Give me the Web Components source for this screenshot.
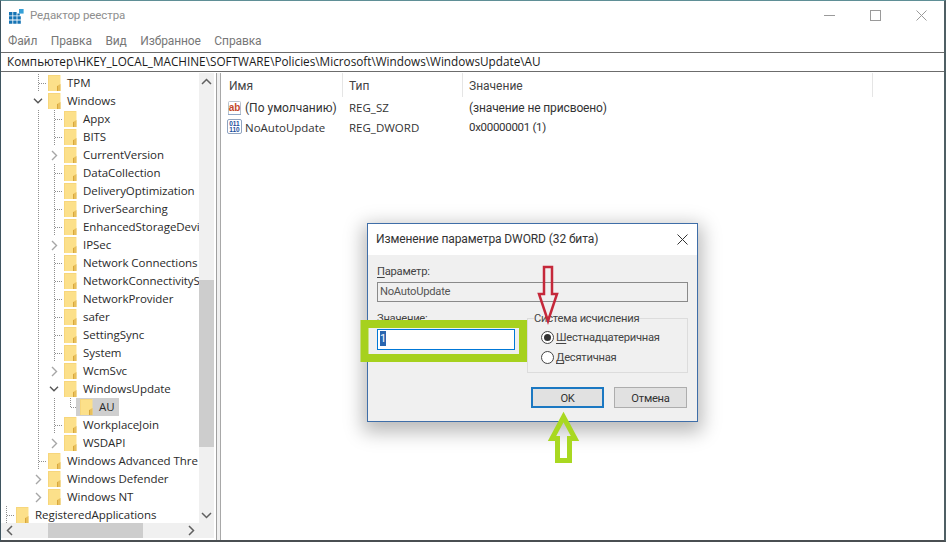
<!DOCTYPE html>
<html lang="ru">
<head>
<meta charset="utf-8">
<title>Редактор реестра</title>
<style>
  html, body { margin: 0; height: 100%; background: #fff; overflow: hidden; }
  body { font: 12px "Open Sans", "Liberation Sans", sans-serif; color: #222; }
</style>
</head>
<body>
<regedit-window>
  <title-bar slot="title"></title-bar>
  <menu-bar slot="menu"></menu-bar>
  <address-bar slot="address">Компьютер\HKEY_LOCAL_MACHINE\SOFTWARE\Policies\Microsoft\Windows\WindowsUpdate\AU</address-bar>
  <key-tree slot="tree"></key-tree>
  <value-list slot="list"></value-list>
</regedit-window>
<dword-dialog></dword-dialog>
<note-marks></note-marks>

<script>
// Регистр: окно, дерево, список значений, диалог и пометки поверх скриншота
(function () {
  const FONT = '"Open Sans", "Liberation Sans", sans-serif';
  const NARROW = 'Roboto, "Liberation Sans", sans-serif';

  function shadow(el, html) {
    el.attachShadow({ mode: "open" }).innerHTML = html;
  }

  class RegeditWindow extends HTMLElement {
    connectedCallback() {
      shadow(this, `
        <style>
          :host {
            display: flex;
            flex-direction: column;
            box-sizing: border-box;
            width: 946px;
            height: 542px;
            background: #fff;
            border-top: 1px solid #5f8f96;
            border-left: 1px solid #3f5560;
            border-bottom: 2px solid #4a4f52;
            border-right: 2px solid #4f5f64;
            font-family: ${FONT};
          }
          .panes { display: flex; flex: 1; min-height: 0; margin-top: 1px; }
          .left { width: 215px; flex: none; display: flex; }
          .split { width: 5px; flex: none; background: #f0f0f0; border-left: 1px solid #a0a0a0; border-right: 1px solid #a8a8a8; box-sizing: border-box; }
          .right { flex: 1; min-width: 0; display: flex; }
        </style>
        <slot name="title"></slot>
        <slot name="menu"></slot>
        <slot name="address"></slot>
        <div class="panes">
          <div class="left"><slot name="tree"></slot></div>
          <div class="split"></div>
          <div class="right"><slot name="list"></slot></div>
        </div>`);
    }
  }

  class TitleBar extends HTMLElement {
    connectedCallback() {
      shadow(this, `
        <style>
          :host { display: flex; align-items: center; height: 29px; flex: none; color: #8e8e8e; font: 11.5px ${NARROW}; }
          svg { display: block; flex: none; }
          .app { margin: 2px 6px 0 8px; }
          .name { flex: 1; letter-spacing: -.1px; padding-bottom: 2px; }
          .btns { display: flex; }
          .btn { width: 46px; height: 29px; display: flex; align-items: center; justify-content: center; }
        </style>
        <svg class="app" width="15" height="15" viewBox="0 0 15 15">
          <path d="M0 3h3.400v3.400H0zM4.200 3h3.400v3.400H4.200zM8.400 4.600h2.400v1.800H8.400zM0 7.200h3.400v3.400H0zM4.200 7.200h3.400v3.400H4.200zM8.400 7.200h3.400v3.400H8.400zM0 11.400h3.400v3.400H0zM4.200 11.400h3.400v3.400H4.200zM8.400 11.400h3.400v3.400H8.400z" fill="#1573b4"/>
          <path d="M10 0h4.600v4.600H10z" fill="#35a0d8"/>
        </svg>
        <span class="name">Редактор реестра</span>
        <div class="btns">
          <span class="btn"><svg width="11" height="11" viewBox="0 0 11 11"><path d="M0 5.500h11" stroke="#9a9a9a" fill="none"/></svg></span>
          <span class="btn"><svg width="11" height="11" viewBox="0 0 11 11"><rect x=".5" y=".5" width="10" height="10" stroke="#9a9a9a" fill="none"/></svg></span>
          <span class="btn"><svg width="11" height="11" viewBox="0 0 11 11"><path d="M.5.5l10 10M10.500.5l-10 10" stroke="#9a9a9a" fill="none"/></svg></span>
        </div>`);
    }
  }

  class MenuBar extends HTMLElement {
    connectedCallback() {
      const items = ["Файл", "Правка", "Вид", "Избранное", "Справка"];
      shadow(this, `
        <style>
          :host { display: flex; align-items: center; gap: 13.5px; height: 22px; flex: none; padding-left: 7px; color: #777; font: 12px ${NARROW}; letter-spacing: -.1px; box-sizing: border-box; }
        </style>
        ${items.map((t) => `<span>${t}</span>`).join("")}`);
    }
  }

  class AddressBar extends HTMLElement {
    connectedCallback() {
      shadow(this, `
        <style>
          :host { display: flex; align-items: center; flex: none; box-sizing: border-box; height: 20px; padding: 0 0 2px 6px; background: #fff; border: 1px solid #6c6c6c; border-width: 1px 0 1px 0; color: #1a1a1a; font-size: 11.75px; }
        </style>
        <slot></slot>`);
    }
  }

  const CHEV_DOWN = `<svg class="down" width="10" height="6" viewBox="0 0 10 6"><path d="M1 .7l4 4 4-4" stroke="#555" stroke-width="1.400" fill="none"/></svg>`;
  const CHEV_RIGHT = `<svg class="right" width="7" height="11" viewBox="0 0 7 11"><path d="M1 1l4.500 4.500L1 10" stroke="#a6a6a6" stroke-width="1.400" fill="none"/></svg>`;

  // level: сколько ячеек слева; lines: столбцы сквозных пунктирных линий
  class TreeRow extends HTMLElement {
    connectedCallback() {
      const level = +this.getAttribute("level");
      const lines = (this.getAttribute("lines") || "").split(",").filter(Boolean).map(Number);
      const node = this.getAttribute("node") || "leaf";
      let cells = "";
      for (let i = 0; i < level; i++) {
        const last = i === level - 1;
        const chevron = last && (node === "open" || node === "closed");
        let cls = "cell";
        if (lines.includes(i) && !chevron) cls += " v";
        let inner = "";
        if (last && node === "leaf") cls += " h";
        if (last && node === "end") cls += " h up";
        if (last && node === "open") inner = CHEV_DOWN;
        if (last && node === "closed") inner = CHEV_RIGHT;
        cells += `<span class="${cls}">${inner}</span>`;
      }
      const sel = this.hasAttribute("selected");
      shadow(this, `
        <style>
          :host { display: flex; height: 18px; align-items: center; white-space: nowrap; font-size: 11.5px; letter-spacing: -.05px; color: #2a2a2a; }
          .cell { width: 16px; height: 18px; flex: none; box-sizing: border-box; display: flex; align-items: center; }
          .cell svg { display: block; }
          .cell svg.right { margin-left: 2px; }
          .v { background: repeating-linear-gradient(#8f8f8f 0 1px, transparent 1px 2px) 5px 0 / 1px 100% no-repeat; }
          .h::after { content: ""; width: 8px; height: 1px; margin-left: 6px; background: repeating-linear-gradient(90deg, #8f8f8f 0 1px, transparent 1px 2px); }
          .up { background: repeating-linear-gradient(#8f8f8f 0 1px, transparent 1px 2px) 5px 0 / 1px 50% no-repeat; }
          .entry { display: flex; align-items: center; height: 18px; margin-left: -1px; }
          .entry .label { padding-bottom: 2px; }
          .sel { background: #cfcfcf; margin-left: -5px; padding: 0 4px; }
          .folder { display: block; flex: none; margin-right: 6px; }
        </style>
        ${cells}
        <span class="entry ${sel ? "sel" : ""}">
          <svg class="folder" width="13" height="16" viewBox="0 0 13 16">
            <path d="M0 0h12.500v16H0z" fill="#fce08a"/>
            <path d="M0 0h12v1H1v15H0z" fill="#f4cf73" opacity=".6"/>
            <path d="M9 11l3.500-2v7H9z" fill="#e8bf5c"/>
            <path d="M9 11h1v5H9z" fill="#d9a83c"/>
          </svg>
          <span class="label"><slot></slot></span>
        </span>`);
    }
  }

  class KeyTree extends HTMLElement {
    connectedCallback() {
      const rows = [
        [3, "leaf", "2", "TPM"],
        [3, "open", "", "Windows"],
        [4, "leaf", "2,3", "Appx"],
        [4, "leaf", "2,3", "BITS"],
        [4, "closed", "2,3", "CurrentVersion"],
        [4, "leaf", "2,3", "DataCollection"],
        [4, "leaf", "2,3", "DeliveryOptimization"],
        [4, "leaf", "2,3", "DriverSearching"],
        [4, "leaf", "2,3", "EnhancedStorageDevi"],
        [4, "closed", "2,3", "IPSec"],
        [4, "leaf", "2,3", "Network Connections"],
        [4, "leaf", "2,3", "NetworkConnectivityS"],
        [4, "leaf", "2,3", "NetworkProvider"],
        [4, "leaf", "2,3", "safer"],
        [4, "leaf", "2,3", "SettingSync"],
        [4, "leaf", "2,3", "System"],
        [4, "closed", "2,3", "WcmSvc"],
        [4, "open", "2,3", "WindowsUpdate"],
        [5, "end", "2,3", "AU", true],
        [4, "leaf", "2,3", "WorkplaceJoin"],
        [4, "closed", "2,3", "WSDAPI"],
        [3, "leaf", "2", "Windows Advanced Thre"],
        [3, "closed", "2", "Windows Defender"],
        [3, "closed", "2", "Windows NT"],
        [1, "leaf", "0", "RegisteredApplications"],
      ];
      shadow(this, `
        <style>
          :host { display: flex; flex-direction: column; flex: 1; min-width: 0; overflow: hidden; }
          .top { display: flex; flex: 1; min-height: 0; }
          .rows { flex: 1; min-width: 0; overflow: hidden; padding-top: 1px; }
          .vbar { width: 15px; flex: none; margin-right: 2px; background: #f0f0f0; display: flex; flex-direction: column; }
          .hbar { height: 15px; flex: none; margin: 0 2px 2px 0; padding-right: 15px; background: #f0f0f0; display: flex; align-items: center; }
          .arr { flex: none; display: flex; align-items: center; justify-content: center; }
          .vbar .arr { height: 16px; }
          .hbar .arr { width: 16px; height: 15px; }
          .vsp1 { height: 191px; flex: none; }
          .vthumb { height: 167px; flex: none; background: #cdcdcd; }
          .vsp2 { flex: 1; }
          .hsp1 { width: 31px; flex: none; }
          .hthumb { width: 95px; height: 15px; flex: none; background: #cdcdcd; }
          .hsp2 { flex: 1; }
        </style>
        <div class="top">
          <div class="rows">
            ${rows.map(([lvl, node, lines, name, sel]) =>
              `<tree-row level="${lvl}" node="${node}" lines="${lines}"${sel ? " selected" : ""}>${name}</tree-row>`).join("")}
          </div>
          <div class="vbar">
            <span class="arr"><svg width="11" height="7" viewBox="0 0 11 7"><path d="M1 6l4.500-4.500L10 6" stroke="#606060" stroke-width="1.500" fill="none"/></svg></span>
            <span class="vsp1"></span><span class="vthumb"></span><span class="vsp2"></span>
            <span class="arr"><svg width="11" height="7" viewBox="0 0 11 7"><path d="M1 1l4.500 4.500L10 1" stroke="#606060" stroke-width="1.500" fill="none"/></svg></span>
          </div>
        </div>
        <div class="hbar">
          <span class="arr"><svg width="7" height="11" viewBox="0 0 7 11"><path d="M6 1L1.500 5.500 6 10" stroke="#606060" stroke-width="1.500" fill="none"/></svg></span>
          <span class="hsp1"></span><span class="hthumb"></span><span class="hsp2"></span>
          <span class="arr"><svg width="7" height="11" viewBox="0 0 7 11"><path d="M1 1l4.500 4.500L1 10" stroke="#606060" stroke-width="1.500" fill="none"/></svg></span>
        </div>`);
    }
  }

  class ValueList extends HTMLElement {
    connectedCallback() {
      shadow(this, `
        <style>
          :host { display: block; flex: 1; min-width: 0; font: 12px ${NARROW}; color: #333; }
          .grid { display: grid; grid-template-columns: 122px 120px 410px; }
          .h { height: 24px; display: flex; align-items: center; padding: 2px 0 0 8px; box-sizing: border-box; border-right: 1px solid #e5e5e5; color: #444; }
          .c { height: 20px; display: flex; align-items: center; padding-left: 6px; gap: 2px; white-space: nowrap; box-sizing: border-box; }
          .first { padding-top: 1px; }
          .h.t, .c.t { padding-left: 6px; }
          .lat { font-family: ${FONT}; font-size: 11.5px; }
          .val { letter-spacing: -.13px; }
          .num { font-size: 11.5px; letter-spacing: -.3px; }
          svg { display: block; flex: none; }
          text { font-family: "Liberation Sans", sans-serif; font-weight: 700; }
        </style>
        <div class="grid">
          <div class="h">Имя</div><div class="h t">Тип</div><div class="h t">Значение</div>
          <div class="c first">
            <svg width="16" height="16" viewBox="0 0 16 16">
              <path d="M1.500 14V2.500a1 1 0 0 1 1-1h10a1 1 0 0 1 1 1V14" fill="#fff" stroke="#b9c2cc"/>
              <path d="M1 14.500h13" stroke="#8fa7c8"/>
              <text x="7.500" y="10.500" text-anchor="middle" font-size="10" fill="#c4482a">ab</text>
            </svg>
            <span>(По умолчанию)</span>
          </div>
          <div class="c t lat first">REG_SZ</div><div class="c t first val">(значение не присвоено)</div>
          <div class="c">
            <svg width="16" height="16" viewBox="0 0 16 16">
              <rect x=".5" y=".5" width="14" height="14" rx="1.500" fill="#fff" stroke="#8fa3c0"/>
              <text x="7.500" y="7" text-anchor="middle" font-size="6.500" fill="#1d4f9c">011</text>
              <text x="7.500" y="13" text-anchor="middle" font-size="6.500" fill="#1d4f9c">110</text>
            </svg>
            <span class="lat">NoAutoUpdate</span>
          </div>
          <div class="c t lat">REG_DWORD</div><div class="c t num">0x00000001 (1)</div>
        </div>`);
    }
  }

  class DwordDialog extends HTMLElement {
    connectedCallback() {
      shadow(this, `
        <style>
          :host { position: absolute; left: 367px; top: 223px; width: 331px; height: 199px; box-sizing: border-box; display: flex; flex-direction: column; background: #f0f0f0; border: 1px solid #3f6ea8; box-shadow: 0 6px 18px 4px rgba(0,0,0,.28); font: 11.2px ${NARROW}; letter-spacing: -.25px; color: #444; }
          .title { height: 31px; flex: none; background: #fff; display: flex; align-items: center; padding: 0 8px; color: #333; font-size: 12px; letter-spacing: -.1px; }
          .title span { flex: 1; padding-bottom: 2px; }
          .title svg { display: block; margin-right: 1px; }
          .body { flex: 1; display: flex; flex-direction: column; padding: 8px 9px 0 9px; }
          .label { height: 18px; line-height: 18px; }
          u { text-underline-offset: 2px; }
          .ro { height: 20px; box-sizing: border-box; border: 1px solid #8a8a8a; background: #f0f0f0; padding-left: 2px; line-height: 18px; color: #555; margin-top: 1px; }
          .row { display: flex; margin-top: 8px; height: 64px; }
          .val { width: 150px; flex: none; }
          .input { display: block; box-sizing: border-box; height: 21px; width: 138px; margin-top: 1px; border: 1px solid #0078d7; background: #fff; padding: 1px 0 0 2px; }
          .input b { font-weight: 400; background: #2a66b0; color: #fff; display: inline-block; height: 15px; line-height: 15px; width: 6px; }
          fieldset { flex: 1; margin: 0; padding: 0; box-sizing: border-box; border: 1px solid #dcdcdc; min-width: 0; height: 63px; }
          legend { padding: 2px 0 0; margin-left: 6px; color: #444; line-height: 14px; }
          .opts { padding: 1px 0 0 13px; }
          .opt { display: flex; align-items: center; gap: 2px; height: 20px; }
          .radio { width: 11px; height: 11px; border: 1px solid #444; border-radius: 50%; background: #fff; display: flex; align-items: center; justify-content: center; flex: none; }
          .radio.on::after { content: ""; width: 7px; height: 7px; border-radius: 50%; background: #333; }
          .btns { display: flex; justify-content: flex-end; gap: 10px; margin-top: 13px; margin-right: 1px; }
          .btn { width: 73px; height: 21px; box-sizing: border-box; border: 1px solid #adadad; background: #e1e1e1; display: flex; align-items: center; justify-content: center; padding-top: 1px; color: #333; }
          .btn.def { border: 2px solid #1b78c2; }
        </style>
        <div class="title">
          <span>Изменение параметра DWORD (32 бита)</span>
          <svg width="11" height="11" viewBox="0 0 11 11"><path d="M.5.5l10 10M10.500.5l-10 10" stroke="#333" fill="none"/></svg>
        </div>
        <div class="body">
          <div class="label"><u>П</u>араметр:</div>
          <div class="ro">NoAutoUpdate</div>
          <div class="row">
            <div class="val">
              <div class="label"><u>З</u>начение:</div>
              <div class="input"><b>1</b></div>
            </div>
            <fieldset>
              <legend>Система исчисления</legend>
              <div class="opts">
                <div class="opt"><span class="radio on"></span><span><u>Ш</u>естнадцатеричная</span></div>
                <div class="opt"><span class="radio"></span><span><u>Д</u>есятичная</span></div>
              </div>
            </fieldset>
          </div>
          <div class="btns">
            <div class="btn def">OK</div>
            <div class="btn">Отмена</div>
          </div>
        </div>`);
    }
  }

  // Рамка и стрелки, нарисованные поверх скриншота
  class NoteMarks extends HTMLElement {
    connectedCallback() {
      shadow(this, `
        <style>
          :host { position: absolute; left: 0; top: 0; width: 946px; height: 542px; display: block; pointer-events: none; }
          svg { display: block; }
        </style>
        <svg width="946" height="542" viewBox="0 0 946 542">
          <rect x="364.500" y="324" width="158.500" height="34" fill="none" stroke="#a6d11e" stroke-width="8"/>
          <path d="M544 267h8v27h5l-9 27-9-27h5z" fill="none" stroke="#c5283a" stroke-width="2.500"/>
          <path d="M563.500 417l11.500 21.500h-5.500v22h-12v-22H552z" fill="none" stroke="#a9d821" stroke-width="5"/>
        </svg>`);
    }
  }

  customElements.define("regedit-window", RegeditWindow);
  customElements.define("title-bar", TitleBar);
  customElements.define("menu-bar", MenuBar);
  customElements.define("address-bar", AddressBar);
  customElements.define("tree-row", TreeRow);
  customElements.define("key-tree", KeyTree);
  customElements.define("value-list", ValueList);
  customElements.define("dword-dialog", DwordDialog);
  customElements.define("note-marks", NoteMarks);
})();
</script>
</body>
</html>
